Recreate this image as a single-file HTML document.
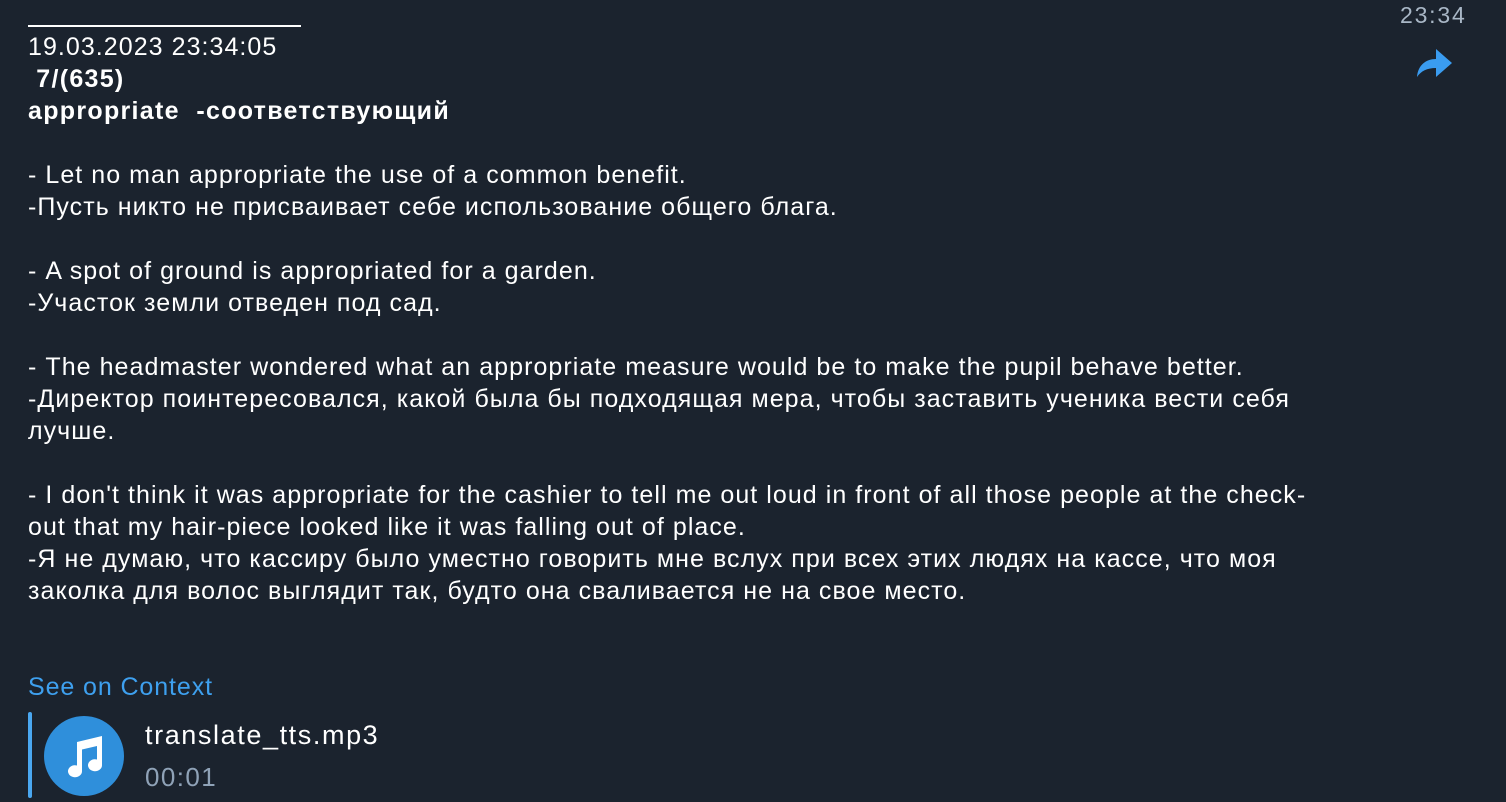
<!DOCTYPE html>
<html><head><meta charset="utf-8"><style>
html,body{margin:0;padding:0;background:#1b232e;width:1506px;height:802px;overflow:hidden}
body{font-family:"Liberation Sans",sans-serif;color:#fff;position:relative}
.rule{position:absolute;left:28px;top:25px;width:273px;height:2px;background:#fff}
.txt{position:absolute;left:28px;top:31px;font-size:25px;line-height:32px;white-space:pre;letter-spacing:1.05px}
.b{font-weight:bold;letter-spacing:1.3px}
.link{color:#3ea0ef;letter-spacing:0.9px}
.time{position:absolute;left:1400px;top:2px;font-size:23px;color:#a9b7c6;letter-spacing:1.8px}
.bar{position:absolute;left:28px;top:712px;width:4px;height:86px;background:#4aa7f0;border-radius:2px}
.circ{position:absolute;left:44px;top:716px;width:80px;height:80px;border-radius:50%;background:#2f8fdb}
.fn{position:absolute;left:145px;top:720px;font-size:27px;letter-spacing:1.6px}
.dur{position:absolute;left:145px;top:762px;font-size:26px;color:#8fa2b7;letter-spacing:1.4px}
</style></head><body>
<div class="rule"></div>
<div class="time">23:34</div>
<svg style="position:absolute;left:1415px;top:46px" width="38" height="34" viewBox="0 0 38 34"><path d="M2 31 C3 19 11 13 21 13 L21 3 L37 17 L21 31 L21 22 C12 22 6 25 2 31 Z" fill="#3a9cf0"/></svg>
<div class="txt">19.03.2023 23:34:05
<span class="b"> 7/(635)</span>
<span class="b">appropriate  -соответствующий</span>

- Let no man appropriate the use of a common benefit.
-Пусть никто не присваивает себе использование общего блага.

- A spot of ground is appropriated for a garden.
-Участок земли отведен под сад.

- The headmaster wondered what an appropriate measure would be to make the pupil behave better.
-Директор поинтересовался, какой была бы подходящая мера, чтобы заставить ученика вести себя
лучше.

- I don't think it was appropriate for the cashier to tell me out loud in front of all those people at the check-
out that my hair-piece looked like it was falling out of place.
-Я не думаю, что кассиру было уместно говорить мне вслух при всех этих людях на кассе, что моя
заколка для волос выглядит так, будто она сваливается не на свое место.


<span class="link">See on Context</span></div>
<div class="bar"></div>
<div class="circ"><svg width="80" height="80" viewBox="0 0 80 80"><path d="M33 26 L58 20 L58 49 A7 6 0 1 1 53 43.5 L53 30 L38 33.5 L38 55 A7 6 0 1 1 33 49.5 Z" fill="#fff"/></svg></div>
<div class="fn">translate_tts.mp3</div>
<div class="dur">00:01</div>
</body></html>
